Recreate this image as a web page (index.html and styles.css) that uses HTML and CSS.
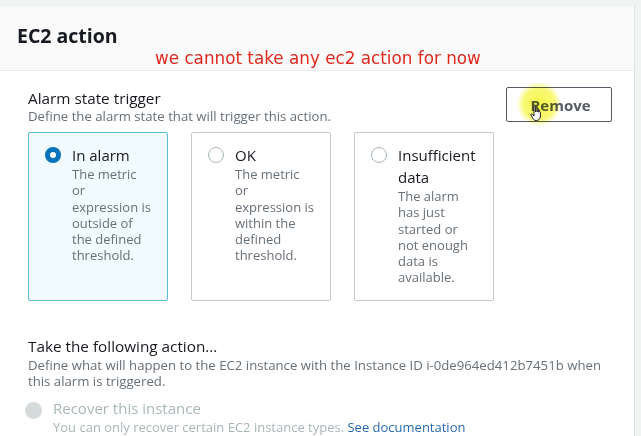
FILE: index.html
```html
<!DOCTYPE html>
<html>
<head>
<meta charset="utf-8">
<link rel="stylesheet" href="styles.css">
</head>
<body>
<div class="panel">
  <div class="panel-header">
    <h2 class="title">EC2 action</h2>
    <div class="note">we cannot take any ec2 action for now</div>
  </div>
  <div class="panel-body">
    <div class="trigger-row">
      <div class="trigger">
        <div class="label">Alarm state trigger</div>
        <div class="desc">Define the alarm state that will trigger this action.</div>
        <div class="cards">
          <div class="card selected">
            <span class="radio checked"></span>
            <div class="card-text">
              <div class="card-title">In alarm</div>
              <div class="card-desc">The metric<br>or<br>expression is<br>outside of<br>the defined<br>threshold.</div>
            </div>
          </div>
          <div class="card">
            <span class="radio"></span>
            <div class="card-text">
              <div class="card-title">OK</div>
              <div class="card-desc">The metric<br>or<br>expression is<br>within the<br>defined<br>threshold.</div>
            </div>
          </div>
          <div class="card">
            <span class="radio"></span>
            <div class="card-text">
              <div class="card-title">Insufficient data</div>
              <div class="card-desc">The alarm<br>has just<br>started or<br>not enough<br>data is<br>available.</div>
            </div>
          </div>
        </div>
      </div>
      <div class="btn-wrap">
        <button class="btn">Remove</button>
        <span class="glow"></span>
        <svg class="hand" width="14" height="18" viewBox="0 0 14 18">
          <path d="M4 1.5c0-.8 1.6-.8 1.6 0V8V6.5c0-.8 1.6-.8 1.6 0V8V7c0-.8 1.6-.8 1.6 0v1.2c0-.8 1.6-.8 1.6 0V12c0 2.5-1.5 4.5-4 4.5H6c-1.5 0-2.5-1-3.2-2.2L1 11c-.4-.8.6-1.4 1.2-.8L4 12V1.5z" fill="#fff" stroke="#222" stroke-width="1" stroke-linejoin="round"/>
        </svg>
      </div>
    </div>
    <div class="action">
      <div class="label">Take the following action...</div>
      <div class="desc wide">Define what will happen to the EC2 instance with the Instance ID i-0de964ed412b7451b when this alarm is triggered.</div>
      <div class="option">
        <span class="radio disabled"></span>
        <div>
          <div class="option-title">Recover this instance</div>
          <div class="option-desc">You can only recover certain EC2 instance types. <a class="link">See documentation</a></div>
        </div>
      </div>
    </div>
  </div>
</div>
</body>
</html>
```
FILE: styles.css
```css
* { box-sizing: border-box; }
html, body { margin: 0; padding: 0; }
body {
  background: #f2f3f3;
  font-family: "Open Sans", "Noto Sans", sans-serif;
  color: #16191f;
  width: 641px;
  height: 436px;
  overflow: hidden;
}
.panel {
  margin-top: 5px;
  width: 635px;
  background: #fff;
  border-top: 1px solid #eaeded;
  border-right: 1px solid #dfe3e3;
  height: 431px;
}
.panel-header {
  background: #fafafa;
  border-bottom: 1px solid #eaeded;
  height: 65px;
  padding: 18px 0 0 17px;
  position: relative;
}
.title {
  margin: 0;
  font-size: 19.5px;
  font-weight: 700;
  line-height: 24px;
  color: #16191f;
}
.note {
  margin: 0 0 0 138px;
  font-family: "DejaVu Sans", sans-serif;
  font-size: 16.8px;
  line-height: 20px;
  color: #e0291f;
}
.panel-body {
  padding: 17px 22px 0 28px;
}
.trigger-row {
  display: flex;
  justify-content: space-between;
  align-items: flex-start;
}
.label {
  font-size: 15.3px;
  line-height: 20px;
  color: #16191f;
}
.desc {
  font-size: 13.2px;
  line-height: 17px;
  color: #687078;
}
.desc.wide {
  line-height: 16px;
  margin-top: 1px;
}
.cards {
  display: flex;
  gap: 23px;
  margin-top: 7px;
}
.card {
  width: 140px;
  height: 169px;
  border: 1px solid #c6cccc;
  border-radius: 2px;
  display: flex;
  padding: 11px 0 0 16px;
  background: #fff;
}
.card.selected {
  background: #f1faff;
  border-color: #5bbcd8;
}
.radio {
  flex: none;
  width: 16px;
  height: 16px;
  border-radius: 50%;
  border: 1.5px solid #aab7b8;
  background: #fff;
  margin-top: 3px;
  margin-right: 11px;
}
.radio.checked {
  border: 5px solid #0073bb;
  background: #fff;
}
.card-text {
  width: 84px;
}
.card-title {
  font-size: 15px;
  line-height: 22px;
  color: #16191f;
}
.card-desc {
  margin-top: 0;
  font-size: 13px;
  line-height: 16.3px;
  color: #687078;
}
.btn-wrap {
  position: relative;
  margin-top: -1px;
}
.btn {
  display: block;
  width: 106px;
  height: 35px;
  border: 1px solid #545b64;
  border-radius: 2px;
  background: #fff;
  font-family: "Open Sans", sans-serif;
  font-weight: 700;
  font-size: 15px;
  color: #545b64;
  padding: 0 0 0 3px;
}
.glow {
  position: absolute;
  left: 11px;
  top: -5px;
  width: 44px;
  height: 44px;
  border-radius: 50%;
  background: radial-gradient(circle, rgba(245,245,40,0.85) 0%, rgba(245,245,60,0.7) 50%, rgba(250,250,90,0) 72%);
  mix-blend-mode: multiply;
  pointer-events: none;
}
.hand {
  position: absolute;
  left: 24px;
  top: 17px;
}
.action {
  margin-top: 35px;
}
.option {
  display: flex;
  margin-top: 9px;
}
.radio.disabled {
  width: 17px;
  height: 17px;
  border: none;
  background: #d5dbdb;
  margin: 4px 11px 0 -3px;
}
.option-title {
  font-size: 15px;
  line-height: 20px;
  color: #aab7b8;
}
.option-desc {
  margin-top: 0;
  font-size: 13px;
  line-height: 18px;
  color: #aab7b8;
}
.link {
  color: #2a6bb0;
}
```
